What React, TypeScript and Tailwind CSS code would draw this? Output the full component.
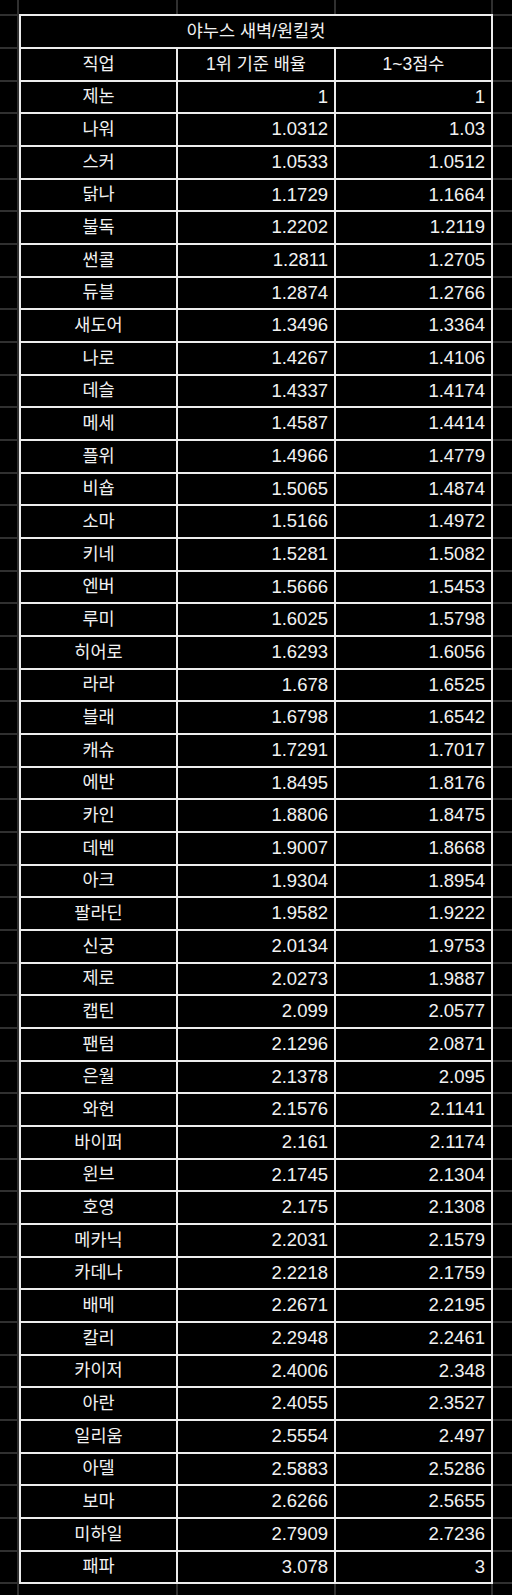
import React from "react";

const data: [string, string, string][] = [
  ["제논", "1", "1"],
  ["나워", "1.0312", "1.03"],
  ["스커", "1.0533", "1.0512"],
  ["닭나", "1.1729", "1.1664"],
  ["불독", "1.2202", "1.2119"],
  ["썬콜", "1.2811", "1.2705"],
  ["듀블", "1.2874", "1.2766"],
  ["새도어", "1.3496", "1.3364"],
  ["나로", "1.4267", "1.4106"],
  ["데슬", "1.4337", "1.4174"],
  ["메세", "1.4587", "1.4414"],
  ["플위", "1.4966", "1.4779"],
  ["비숍", "1.5065", "1.4874"],
  ["소마", "1.5166", "1.4972"],
  ["키네", "1.5281", "1.5082"],
  ["엔버", "1.5666", "1.5453"],
  ["루미", "1.6025", "1.5798"],
  ["히어로", "1.6293", "1.6056"],
  ["라라", "1.678", "1.6525"],
  ["블래", "1.6798", "1.6542"],
  ["캐슈", "1.7291", "1.7017"],
  ["에반", "1.8495", "1.8176"],
  ["카인", "1.8806", "1.8475"],
  ["데벤", "1.9007", "1.8668"],
  ["아크", "1.9304", "1.8954"],
  ["팔라딘", "1.9582", "1.9222"],
  ["신궁", "2.0134", "1.9753"],
  ["제로", "2.0273", "1.9887"],
  ["캡틴", "2.099", "2.0577"],
  ["팬텀", "2.1296", "2.0871"],
  ["은월", "2.1378", "2.095"],
  ["와헌", "2.1576", "2.1141"],
  ["바이퍼", "2.161", "2.1174"],
  ["윈브", "2.1745", "2.1304"],
  ["호영", "2.175", "2.1308"],
  ["메카닉", "2.2031", "2.1579"],
  ["카데나", "2.2218", "2.1759"],
  ["배메", "2.2671", "2.2195"],
  ["칼리", "2.2948", "2.2461"],
  ["카이저", "2.4006", "2.348"],
  ["아란", "2.4055", "2.3527"],
  ["일리움", "2.5554", "2.497"],
  ["아델", "2.5883", "2.5286"],
  ["보마", "2.6266", "2.5655"],
  ["미하일", "2.7909", "2.7236"],
  ["패파", "3.078", "3"],
];

const heights = ["h-[33px]", "h-[33px]", "h-[32px]"];

function Row({
  idx,
  last,
  children,
}: {
  idx: number;
  last?: boolean;
  children: React.ReactNode;
}) {
  const h = last ? "h-[34px]" : heights[(idx + 2) % 3];
  return (
    <div className={`flex ${h}`}>
      <div
        className={`w-[17px] border-t-2 border-[#303030] ${last ? "border-b-2" : ""}`}
      />
      <div className="w-[2px] bg-[#303030]" />
      <div
        className={`flex w-[474px] border-t-2 border-l-2 border-r-2 border-[#ececec] ${
          last ? "border-b-2" : ""
        }`}
      >
        {children}
      </div>
      <div
        className={`flex-1 border-t-2 border-[#303030] ${last ? "border-b-2" : ""}`}
      />
    </div>
  );
}

function Spacer({ h }: { h: string }) {
  return (
    <div className={`flex ${h}`}>
      <div className="w-[17px]" />
      <div className="w-[2px] bg-[#303030]" />
      <div className="w-[157px]" />
      <div className="w-[2px] bg-[#303030]" />
      <div className="w-[156px]" />
      <div className="w-[2px] bg-[#303030]" />
      <div className="w-[155px]" />
      <div className="w-[2px] bg-[#303030]" />
    </div>
  );
}

export default function App() {
  const font = {
    fontFamily: '"Liberation Sans", "Noto Sans CJK KR", sans-serif',
  };
  return (
    <div
      className="w-[512px] h-[1595px] bg-black text-[#f2f2f2] text-[18.5px] leading-none overflow-hidden"
      style={font}
    >
      <Spacer h="h-[14px]" />
      <Row idx={-2}>
        <div className="flex-1 flex items-center justify-center text-[17.5px]">
          야누스 새벽/원킬컷
        </div>
      </Row>
      <Row idx={-1}>
        <div className="w-[155px] flex items-center justify-center text-[17.5px]">
          직업
        </div>
        <div className="w-[158px] border-l-2 border-[#ececec] flex items-center justify-center text-[17.5px]">
          1위 기준 배율
        </div>
        <div className="flex-1 border-l-2 border-[#ececec] flex items-center justify-center text-[17.5px]">
          1~3점수
        </div>
      </Row>
      {data.map(([job, a, b], i) => (
        <Row key={job} idx={i} last={i === data.length - 1}>
          <div className="w-[155px] flex items-center justify-center text-[17.5px]">
            {job}
          </div>
          <div className="w-[158px] border-l-2 border-[#ececec] flex items-center justify-end pr-[6px]">
            {a}
          </div>
          <div className="flex-1 border-l-2 border-[#ececec] flex items-center justify-end pr-[6px]">
            {b}
          </div>
        </Row>
      ))}
      <Spacer h="h-[20px]" />
    </div>
  );
}
